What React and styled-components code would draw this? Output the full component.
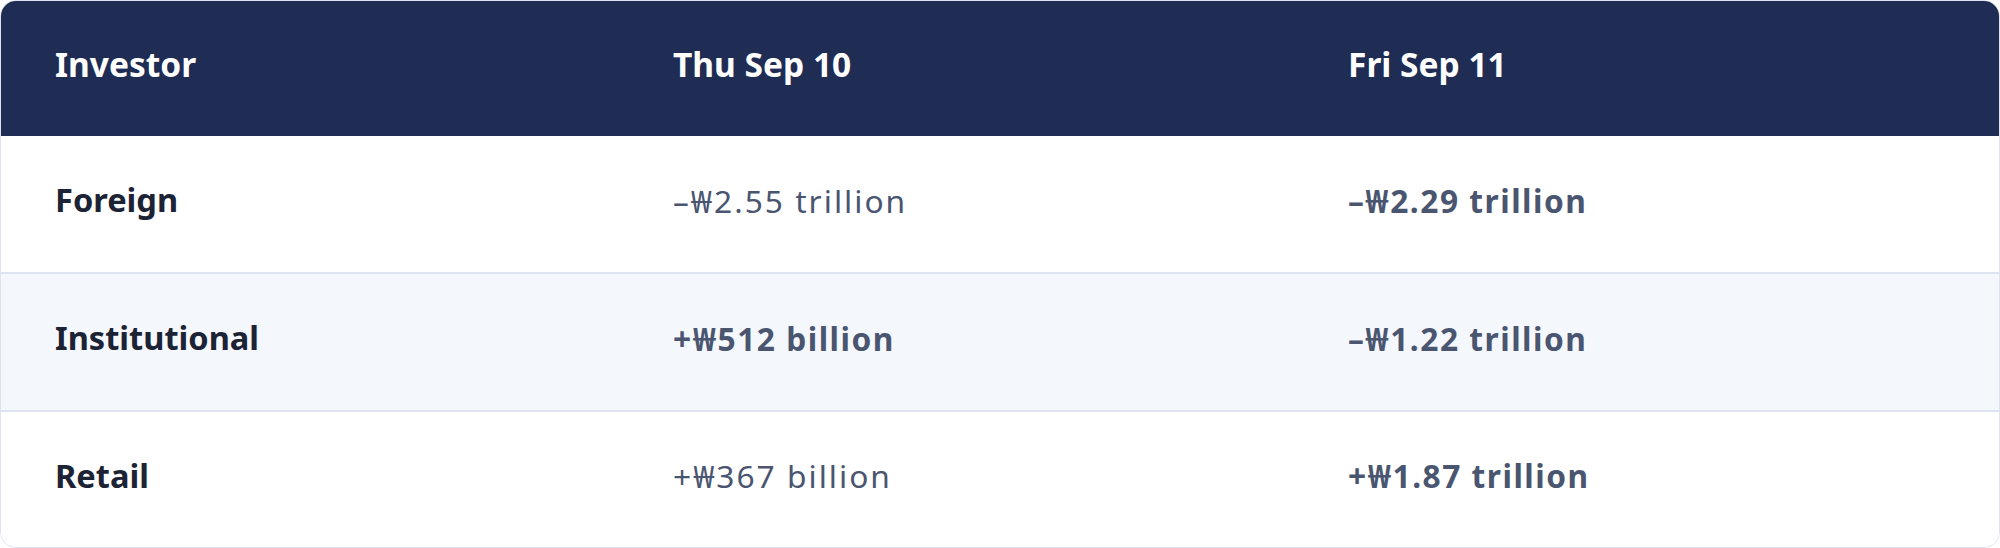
import React from "react";
import styled, { createGlobalStyle } from "styled-components";

const Global = createGlobalStyle`
  html, body { margin: 0; padding: 0; background: #ffffff; }
  body { font-family: "Noto Sans", "Noto Sans CJK KR", sans-serif; }
`;

const Table = styled.div`
  box-sizing: border-box;
  width: 2000px;
  height: 548px;
  border: 1px solid #dde3f0;
  border-radius: 16px;
  overflow: hidden;
  display: flex;
  flex-direction: column;
  background: #ffffff;
`;

const Row = styled.div`
  display: grid;
  grid-template-columns: 618px 675px 1fr;
  align-items: center;
  box-sizing: border-box;
  height: ${(p) => p.$h}px;
  background: ${(p) => (p.$alt ? "#f4f7fc" : "#ffffff")};
  border-top: ${(p) => (p.$divider ? "2px solid #dee4f1" : "none")};
`;

const HeaderRow = styled(Row)`
  background: #1f2c54;
  padding-bottom: 8px;
`;

const HeadCell = styled.div`
  padding-left: 54px;
  color: #ffffff;
  font-size: 33.5px;
  font-weight: 700;
  line-height: 1.3;
`;

const NameCell = styled.div`
  padding-left: 54px;
  color: #1b2335;
  font-size: 32.6px;
  font-weight: 700;
  line-height: 1.3;
  padding-bottom: 7px;
`;

const ValueCell = styled.div`
  padding-left: 54px;
  color: #4a5570;
  font-size: 31.7px;
  font-weight: ${(p) => (p.$strong ? 700 : 400)};
  letter-spacing: ${(p) => (p.$strong ? "1.5px" : "2px")};
  line-height: 1.3;
  padding-bottom: 7px;
`;

const rows = [
  { name: "Foreign", a: "–₩2.55 trillion", aStrong: false, b: "–₩2.29 trillion", bStrong: true },
  { name: "Institutional", a: "+₩512 billion", aStrong: true, b: "–₩1.22 trillion", bStrong: true },
  { name: "Retail", a: "+₩367 billion", aStrong: false, b: "+₩1.87 trillion", bStrong: true },
];

const heights = [136, 138, 137];

export default function App() {
  return (
    <>
      <Global />
      <Table>
        <HeaderRow $h={135}>
          <HeadCell>Investor</HeadCell>
          <HeadCell>Thu Sep 10</HeadCell>
          <HeadCell>Fri Sep 11</HeadCell>
        </HeaderRow>
        {rows.map((r, i) => (
          <Row key={r.name} $h={heights[i]} $alt={i === 1} $divider={i > 0}>
            <NameCell>{r.name}</NameCell>
            <ValueCell $strong={r.aStrong}>{r.a}</ValueCell>
            <ValueCell $strong={r.bStrong}>{r.b}</ValueCell>
          </Row>
        ))}
      </Table>
    </>
  );
}
